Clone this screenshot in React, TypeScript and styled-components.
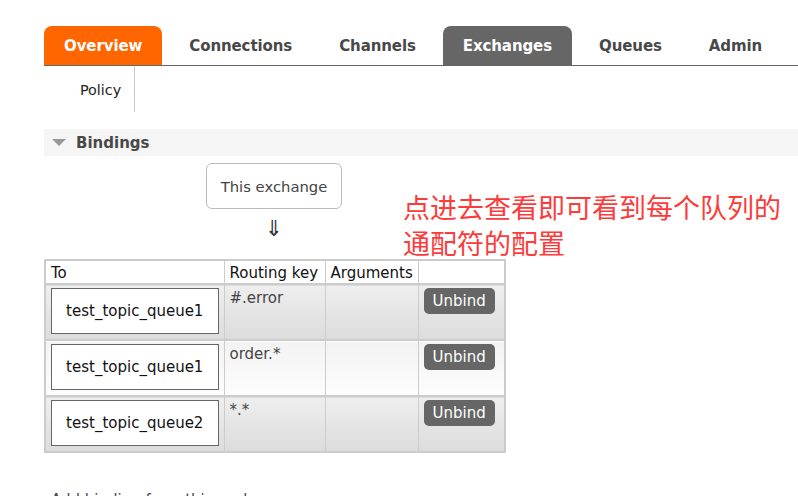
import React from 'react';
import styled, { createGlobalStyle } from 'styled-components';

const GlobalStyle = createGlobalStyle`
  html, body {
    margin: 0;
    padding: 0;
    background: #fff;
  }
  body {
    font-family: "DejaVu Sans", Verdana, sans-serif;
    color: #484848;
  }
`;

const Page = styled.div`
  position: relative;
  box-sizing: border-box;
  height: 496px;
  overflow: hidden;
  padding: 26px 0 0 44px;
`;

const TabBar = styled.ul`
  display: flex;
  gap: 7px;
  margin: 0;
  padding: 0;
  list-style: none;
  height: 39px;
  border-bottom: 1px solid #666;
`;

const Tab = styled.li<{ $bg?: string }>`
  display: flex;
  align-items: center;
  padding: 0 20px;
  font-size: 15px;
  font-weight: bold;
  letter-spacing: -0.1px;
  border-radius: 8px 8px 0 0;
  background: ${p => p.$bg || 'transparent'};
  color: ${p => (p.$bg ? '#fff' : '#484848')};
`;

const SubNav = styled.div`
  display: flex;
  height: 46px;
`;

const SubItem = styled.div`
  display: flex;
  align-items: center;
  margin-left: 36px;
  padding: 2px 13px 0 0;
  border-right: 1px solid #ccc;
  font-size: 14.3px;
  color: #222;
`;

const SectionHead = styled.div`
  display: flex;
  align-items: center;
  margin-top: 17px;
  height: 27px;
  padding-left: 8px;
  background: #f5f5f5;
  font-size: 15px;
  font-weight: bold;
  color: #484848;
`;

const Triangle = styled.span`
  width: 0;
  height: 0;
  margin-right: 10px;
  border-left: 7px solid transparent;
  border-right: 7px solid transparent;
  border-top: 7px solid #999;
`;

const Bindings = styled.div`
  width: 460px;
  padding-top: 7px;
`;

const ExchangeBox = styled.div`
  display: flex;
  align-items: center;
  justify-content: center;
  box-sizing: border-box;
  width: 136px;
  height: 46px;
  margin: 0 auto;
  border: 1px solid #bbb;
  border-radius: 6px;
  font-size: 14.8px;
  color: #444;
`;

const Arrow = styled.div`
  height: 28px;
  margin: 6px 0 16px;
  text-align: center;
  font-size: 22px;
  line-height: 28px;
  color: #333;
`;

const Table = styled.table`
  width: 460px;
  table-layout: fixed;
  border-collapse: collapse;
  border: 2px solid #ccc;
  font-size: 15px;
`;

const Th = styled.th<{ $w: number }>`
  box-sizing: border-box;
  width: ${p => p.$w}px;
  height: 24px;
  padding: 1px 5px 0;
  text-align: left;
  font-weight: normal;
  color: #111;
  background: #fff;
  border: 1px solid #ccc;
  border-bottom: 2px solid #ccc;
  white-space: nowrap;
`;

const Row = styled.tr<{ $alt: boolean }>`
  height: 56px;
  background: ${p =>
    p.$alt
      ? 'linear-gradient(#f3f3f3, #fdfdfd)'
      : 'linear-gradient(#eeeeee, #dcdcdc)'};
  border-top: 2px solid #ccc;
`;

const Td = styled.td`
  vertical-align: top;
  padding: 3px 5px;
  border-left: 1px solid #ccc;
  border-right: 1px solid #ccc;
  color: #444;
`;

const KeyCell = styled(Td)`
  padding-top: 4px;
`;

const QueueBox = styled.div`
  display: flex;
  align-items: center;
  justify-content: center;
  box-sizing: border-box;
  height: 46px;
  border: 1px solid #666;
  background: #fff;
  color: #111;
`;

const UnbindButton = styled.button`
  height: 26px;
  padding: 0 9px;
  border: none;
  border-radius: 5px;
  background: #666;
  color: #fff;
  font-family: inherit;
  font-size: 15px;
`;

const Note = styled.div`
  position: absolute;
  left: 403px;
  top: 189px;
  width: 395px;
  font-family: "Noto Sans CJK SC", sans-serif;
  font-size: 27px;
  line-height: 36px;
  color: #fd3b3b;
`;

const AddTitle = styled.div`
  margin: 38px 0 0 7px;
  font-size: 15px;
  color: #484848;
`;

const tabs = ['Overview', 'Connections', 'Channels', 'Exchanges', 'Queues', 'Admin'];

const bindings = [
  { to: 'test_topic_queue1', key: '#.error' },
  { to: 'test_topic_queue1', key: 'order.*' },
  { to: 'test_topic_queue2', key: '*.*' },
];

export default function App() {
  return (
    <Page>
      <GlobalStyle />
      <TabBar>
        {tabs.map(t => (
          <Tab
            key={t}
            $bg={t === 'Overview' ? '#ff6600' : t === 'Exchanges' ? '#666' : undefined}
          >
            {t}
          </Tab>
        ))}
      </TabBar>
      <SubNav>
        <SubItem>Policy</SubItem>
      </SubNav>
      <SectionHead>
        <Triangle />
        Bindings
      </SectionHead>
      <Bindings>
        <ExchangeBox>This exchange</ExchangeBox>
        <Arrow>⇓</Arrow>
        <Table>
          <thead>
            <tr>
              <Th $w={179}>To</Th>
              <Th $w={101}>Routing key</Th>
              <Th $w={93}>Arguments</Th>
              <Th $w={87}></Th>
            </tr>
          </thead>
          <tbody>
            {bindings.map((b, i) => (
              <Row key={i} $alt={i === 1}>
                <Td>
                  <QueueBox>{b.to}</QueueBox>
                </Td>
                <KeyCell>{b.key}</KeyCell>
                <Td></Td>
                <Td>
                  <UnbindButton>Unbind</UnbindButton>
                </Td>
              </Row>
            ))}
          </tbody>
        </Table>
      </Bindings>
      <AddTitle>Add binding from this exchange</AddTitle>
      <Note>
        点进去查看即可看到每个队列的
        <br />
        通配符的配置
      </Note>
    </Page>
  );
}
